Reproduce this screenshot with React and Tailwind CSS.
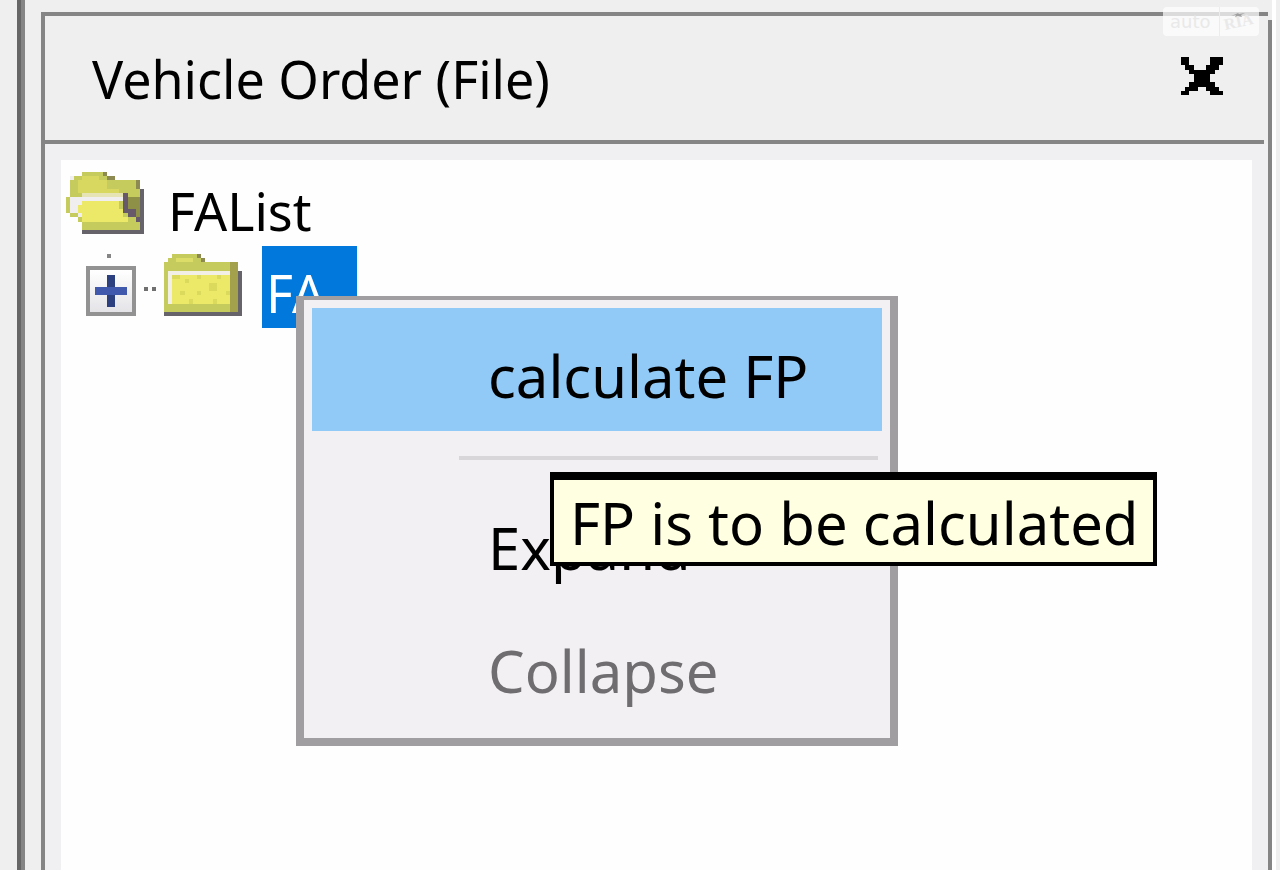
function OpenFolderIcon() {
  return (
    <svg viewBox="0 0 19 15" preserveAspectRatio="none" shapeRendering="crispEdges" className="w-[78px] h-[62px] shrink-0" aria-hidden="true">
      <path fill="#67636a" d="M4 14h14V4h1v11H4z" />
      <path fill="#c5cb5c" d="M4 0h5v1h1v1h8v12H4v-2H3v-1H1v-1H0V6h1V2h1V1h2z" />
      <path fill="#d8d860" d="M4 1h4v1h2v2h3v1H3V2h1z" />
      <path fill="#8c8a50" d="M9 0h1v1h2v1h-2V1H9zM17 2h1v2h-1z" />
      <path fill="#e6e4b4" d="M4 5h10v1H4z" />
      <path fill="#f0eeee" d="M1 6h13v1H4v2H3v1H1zM1 1h1v1H1zM3 10h1v1H3z" />
      <path fill="#ece968" d="M4 7h9v2h1v2h1v1H4v-2H3V8h1z" />
      <path fill="#8f9048" d="M15 6h3v5h-1v-1h-1V9h-1z" />
      <path fill="#67586a" d="M14 5h1v4h2v2h-2v-1h-1zM17 11h1v1h-1z" />
    </svg>
  );
}

function FolderIcon() {
  return (
    <svg viewBox="0 0 19 15" preserveAspectRatio="none" shapeRendering="crispEdges" className="w-[78px] h-[62px] shrink-0" aria-hidden="true">
      <path fill="#67636a" d="M0 14h18V4h1v11H0z" />
      <path fill="#c5cb5c" d="M2 0h6v1h1v1h9v12H0V2h1V1h1z" />
      <path fill="#dcdc68" d="M3 1h4v1H3z" />
      <path fill="#8c8a50" d="M8 0h1v1h1v1H9V1H8z" />
      <path fill="#a3a14c" d="M16 2h2v12h-2z" />
      <path fill="#f1efe6" d="M1 4h15v1H2v7H1z" />
      <path fill="#ece968" d="M2 5h14v7H2z" />
      <path fill="#dcda5c" d="M2 5h2v1H2zM5 6h1v1H5zM8 5h1v1H8zM13 5h1v1h-1zM11 7h2v2h-2zM4 9h1v1H4zM8 9h1v1H8zM6 11h1v1H6zM12 11h1v1h-1zM15 9h1v1h-1z" />
    </svg>
  );
}

function CloseIcon() {
  return (
    <svg viewBox="0 0 10 9" preserveAspectRatio="none" shapeRendering="crispEdges" className="w-[42px] h-[38px]" aria-hidden="true">
      <path d="M0 0h2v2h1v1h3V2h1V0h3v2H9v1H8v1H7v2h1v1h1v1h1v1H7V8H6V7H4v1H2v1H0V8h1V7h1V6h1V4H2V3H1V2H0z" />
    </svg>
  );
}

function Watermark() {
  return (
    <div className="absolute right-[21px] top-[7px] flex h-[29px] w-24 items-center rounded bg-white/70 pl-[7px] text-[#e9e9e9]" aria-hidden="true">
      <span className="font-['DejaVu_Sans',sans-serif] text-[18px] leading-none">auto</span>
      <span className="ml-2 h-full w-px bg-[#ececec]" />
      <span className="relative ml-1 -rotate-12 font-['Liberation_Serif',serif] text-[16px] font-bold leading-none">RIA</span>
      <svg viewBox="0 0 14 6" className="absolute left-[68px] top-[5px] h-[6px] w-[14px]">
        <path fill="#a0a0a0" d="M0 4l5-2 2-1 1 1 6-1-4 2 1 2-4-1-3 1 1-2z" />
      </svg>
    </div>
  );
}

function MenuItem({ label, active, disabled, children }) {
  return (
    <div className="relative">
      <button
        type="button"
        role="menuitem"
        disabled={disabled}
        className={`flex h-[123px] w-full items-center pl-44 pt-3 text-left ${active ? 'bg-[#91c9f7]' : ''} ${disabled ? 'text-[#6f6d70]' : ''}`}
      >
        {label}
      </button>
      {children}
    </div>
  );
}

function ContextMenu() {
  return (
    <div
      role="menu"
      className="absolute left-[34px] top-[50px] z-10 w-[602px] border-8 border-t-4 border-[#a09ea1] bg-[#f2f0f3] px-2 pb-3 pt-2 text-[58px] leading-none text-black"
    >
      <MenuItem label="calculate FP" active>
        <div
          role="tooltip"
          className="absolute left-[238px] top-[164px] z-20 flex h-[94px] items-center whitespace-nowrap border-4 border-t-8 border-black bg-[#ffffe1] pl-4 pr-[14px] pt-1"
        >
          FP is to be calculated
        </div>
      </MenuItem>
      <hr className="mb-5 ml-[147px] mr-1 mt-[25px] border-t-4 border-[#d8d6d9]" />
      <MenuItem label="Expand" />
      <MenuItem label="Collapse" disabled />
    </div>
  );
}

function Tree() {
  return (
    <ul role="tree" className="pt-1 text-[52px] leading-none">
      <li role="treeitem" aria-expanded="true">
        <div className="flex h-[82px] items-start pl-[5px]">
          <div className="pt-2"><OpenFolderIcon /></div>
          <span className="ml-6 flex h-full items-center pt-3">FAList</span>
        </div>
        <ul role="group">
          <li role="treeitem" aria-selected="true" className="flex h-[82px] items-start pl-[25px]">
            <div className="flex flex-col items-center gap-2 pt-2">
              <span className="-ml-1 size-1 bg-[#858585]" />
              <button
                type="button"
                aria-label="Expand FA"
                className="flex size-[50px] items-center justify-center border-4 border-[#929292] bg-gradient-to-b from-white to-[#e4e4e8]"
              >
                <svg viewBox="0 0 8 8" shapeRendering="crispEdges" className="size-8" aria-hidden="true">
                  <path fill="#2c4080" d="M3 0h2v8H3z" />
                  <path fill="#4059ac" d="M0 3h8v2H0z" />
                </svg>
              </button>
            </div>
            <div className="flex gap-1 px-2 pt-[41px]">
              <span className="size-1 bg-[#6f6f6f]" />
              <span className="size-1 bg-[#6f6f6f]" />
            </div>
            <div className="pt-2"><FolderIcon /></div>
            <div className="relative ml-5 h-full">
              <span className="flex h-full items-center bg-[#0078dc] pl-1 pr-8 pt-3 text-white">FA</span>
              <ContextMenu />
            </div>
          </li>
        </ul>
      </li>
    </ul>
  );
}

export default function App() {
  return (
    <div className="relative flex min-h-screen bg-[#efefef] font-['Noto_Sans',sans-serif] text-black">
      <div className="w-[17px]" />
      <div className="w-2 border-l-4 border-[#666] bg-[#858585]" />
      <div className="w-4" />
      <section className="mt-3 flex flex-1 flex-col border-l-4 border-t-4 border-[#858585]">
        <header className="mr-1 flex h-32 items-center justify-between border-b-4 border-[#858585] pl-[47px] pr-[41px]">
          <h1 className="pt-[2px] text-[52px] leading-none">Vehicle Order (File)</h1>
          <button type="button" aria-label="Close" className="pb-1"><CloseIcon /></button>
        </header>
        <div className="flex flex-1 flex-col bg-[#f0eff2] px-4 pt-4">
          <div className="flex-1 bg-[#fefefe]">
            <Tree />
          </div>
        </div>
      </section>
      <div className="mt-5 w-1 bg-[#858585]" />
      <div className="mr-1 w-1 bg-white" />
      <Watermark />
    </div>
  );
}
